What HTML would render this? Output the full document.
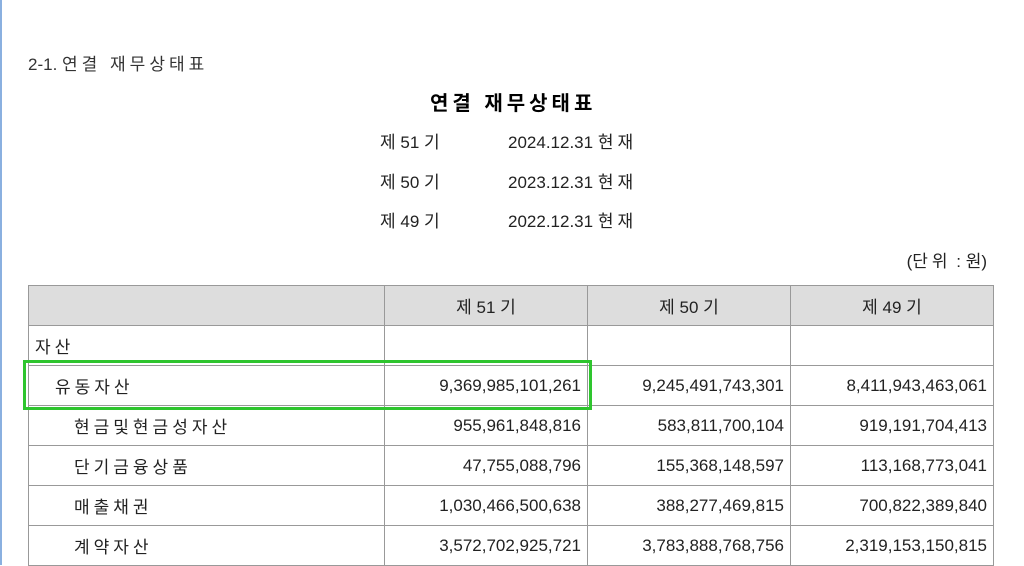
<!DOCTYPE html>
<html><head><meta charset="utf-8"><style>
body{margin:0;width:1024px;height:565px;overflow:hidden;background:#fff;font-family:"Liberation Sans","Noto Sans CJK KR","NanumGothic",sans-serif;color:#222;position:relative}
.t{position:absolute;white-space:nowrap;font-size:17px}
.k{letter-spacing:4px}
table{position:absolute;left:28px;top:285px;border-collapse:collapse;font-size:17px}
td{border:1px solid #999;height:40px;padding:0 6px;box-sizing:border-box}
tr.h td{background:#ddd;text-align:center}
td.n{text-align:right}
.edge{position:absolute;left:0;top:0;width:2px;height:565px;background:#8ab0e0}
.g{position:absolute;left:23px;top:360px;width:563px;height:44px;border:3px solid #2ec52e}
</style></head><body>
<div class="edge"></div>
<div class="t" style="left:28px;top:50px;color:#333">2-1. <span class="k">연결 재무상태표</span></div>
<div class="t k" style="left:430px;top:87px;font-size:20px;font-weight:bold;color:#000">연결 재무상태표</div>
<div class="t" style="left:380px;top:128px">제 51 기</div><div class="t" style="left:508px;top:128px">2024.12.31 <span class="k">현재</span></div>
<div class="t" style="left:380px;top:168px">제 50 기</div><div class="t" style="left:508px;top:168px">2023.12.31 <span class="k">현재</span></div>
<div class="t" style="left:380px;top:207px">제 49 기</div><div class="t" style="left:508px;top:207px">2022.12.31 <span class="k">현재</span></div>
<div class="t" style="right:37px;top:247px">(<span class="k">단위</span> : <span>원</span>)</div>
<table>
<colgroup><col style="width:356px"><col style="width:203px"><col style="width:203px"><col style="width:203px"></colgroup>
<tr class="h"><td></td><td>제 51 기</td><td>제 50 기</td><td>제 49 기</td></tr>
<tr><td class="k">자산</td><td></td><td></td><td></td></tr>
<tr><td class="k" style="padding-left:26px">유동자산</td><td class="n">9,369,985,101,261</td><td class="n">9,245,491,743,301</td><td class="n">8,411,943,463,061</td></tr>
<tr><td class="k" style="padding-left:45px">현금및현금성자산</td><td class="n">955,961,848,816</td><td class="n">583,811,700,104</td><td class="n">919,191,704,413</td></tr>
<tr><td class="k" style="padding-left:45px">단기금융상품</td><td class="n">47,755,088,796</td><td class="n">155,368,148,597</td><td class="n">113,168,773,041</td></tr>
<tr><td class="k" style="padding-left:45px">매출채권</td><td class="n">1,030,466,500,638</td><td class="n">388,277,469,815</td><td class="n">700,822,389,840</td></tr>
<tr><td class="k" style="padding-left:45px">계약자산</td><td class="n">3,572,702,925,721</td><td class="n">3,783,888,768,756</td><td class="n">2,319,153,150,815</td></tr>
</table>
<div class="g"></div>
</body></html>
